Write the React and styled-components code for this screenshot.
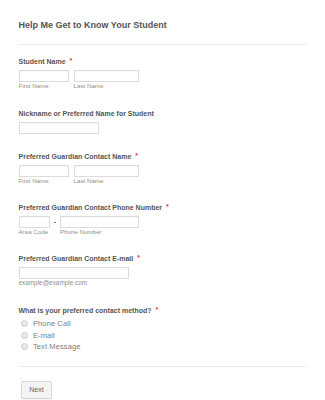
import React from "react";
import styled, { createGlobalStyle } from "styled-components";

const Global = createGlobalStyle`
  html, body { margin: 0; padding: 0; background: #fff; }
  body { font-family: "Liberation Sans", Arial, sans-serif; }
  * { box-sizing: border-box; }
`;

const Page = styled.div`
  width: 325px;
  height: 400px;
  padding: 0 18px;
  overflow: hidden;
  background: #fff;
`;

const Header = styled.div`
  padding: 19px 0 13px 0.5px;
  border-bottom: 1px solid #ececec;
`;

const Title = styled.h1`
  margin: 0;
  font-size: 9px;
  line-height: 12px;
  font-weight: bold;
  color: #555;
`;

const Field = styled.div`
  margin-top: ${(p) => p.$gap}px;
  padding-left: 0.5px;
`;

const Label = styled.div`
  font-size: 7px;
  line-height: 9px;
  font-weight: bold;
  color: #555;
  margin-bottom: 4px;
  white-space: nowrap;
`;

const Req = styled.span`
  color: #f0393b;
  margin-left: 4px;
  font-size: 7px;
  position: relative;
  top: -1px;
`;

const Row = styled.div`
  display: flex;
  align-items: flex-start;
  gap: ${(p) => p.$gap ?? 5}px;
`;

const Col = styled.div`
  display: flex;
  flex-direction: column;
`;

const Input = styled.div`
  width: ${(p) => p.$w}px;
  height: 12px;
  border: 1px solid #dcdcdc;
  background: #fff;
  box-shadow: inset 0 1px 1px rgba(0, 0, 0, 0.03);
`;

const Sub = styled.div`
  font-size: ${(p) => p.$size ?? 6.1}px;
  line-height: 8px;
  color: #8e8e8e;
  letter-spacing: 0.05px;
  white-space: nowrap;
`;

const Dash = styled.div`
  width: 10.6px;
  height: 12px;
  display: flex;
  align-items: center;
  justify-content: center;
  &::before {
    content: "";
    width: 2px;
    height: 1px;
    background: #777;
  }
`;

const Radios = styled.div`
  display: flex;
  flex-direction: column;
  margin-top: -1.6px;
`;

const RadioRow = styled.label`
  display: flex;
  align-items: center;
  height: 11.67px;
  padding-left: 2px;
`;

const Circle = styled.span`
  width: 7px;
  height: 7px;
  border-radius: 50%;
  border: 1px solid #cfcfcf;
  background: radial-gradient(circle at 50% 40%, #f0f0f0, #dcdcdc);
  margin-right: 5.5px;
  flex: none;
`;

const RadioText = styled.span`
  font-size: 7.5px;
  color: #7d7d7d;
  letter-spacing: 0.1px;
`;

const Footer = styled.div`
  margin-top: 13px;
  border-top: 1px solid #ececec;
  padding: 11.5px 0 0 3px;
`;

const Button = styled.button`
  width: 31px;
  height: 18px;
  border: 1px solid #d8d8d8;
  border-radius: 2px;
  background: #f4f4f4;
  color: #666;
  font-family: "Liberation Sans", Arial, sans-serif;
  font-size: 7px;
  padding: 0;
  box-shadow: 0 1px 1px rgba(0, 0, 0, 0.04);
`;

function NameField({ label, gap }) {
  return (
    <Field $gap={gap}>
      <Label>
        {label}
        <Req>*</Req>
      </Label>
      <Row>
        <Col>
          <Input $w={50} />
          <Sub>First Name</Sub>
        </Col>
        <Col>
          <Input $w={65} />
          <Sub>Last Name</Sub>
        </Col>
      </Row>
    </Field>
  );
}

export default function App() {
  const options = ["Phone Call", "E-mail", "Text Message"];
  return (
    <>
      <Global />
      <Page>
        <Header>
          <Title>Help Me Get to Know Your Student</Title>
        </Header>

        <NameField label="Student Name" gap={12} />

        <Field $gap={19}>
          <Label>Nickname or Preferred Name for Student</Label>
          <Input $w={80} />
        </Field>

        <NameField label="Preferred Guardian Contact Name" gap={17.7} />

        <Field $gap={18.4}>
          <Label>
            Preferred Guardian Contact Phone Number
            <Req>*</Req>
          </Label>
          <Row $gap={0}>
            <Col>
              <Input $w={31} />
              <Sub>Area Code</Sub>
            </Col>
            <Dash />
            <Col>
              <Input $w={79} />
              <Sub>Phone Number</Sub>
            </Col>
          </Row>
        </Field>

        <Field $gap={18.4}>
          <Label>
            Preferred Guardian Contact E-mail
            <Req>*</Req>
          </Label>
          <Col>
            <Input $w={110} />
            <Sub $size={6.3}>example@example.com</Sub>
          </Col>
        </Field>

        <Field $gap={18.8}>
          <Label>
            What is your preferred contact method?
            <Req>*</Req>
          </Label>
          <Radios>
            {options.map((o) => (
              <RadioRow key={o}>
                <Circle />
                <RadioText>{o}</RadioText>
              </RadioRow>
            ))}
          </Radios>
        </Field>

        <Footer>
          <Button>Next</Button>
        </Footer>
      </Page>
    </>
  );
}
